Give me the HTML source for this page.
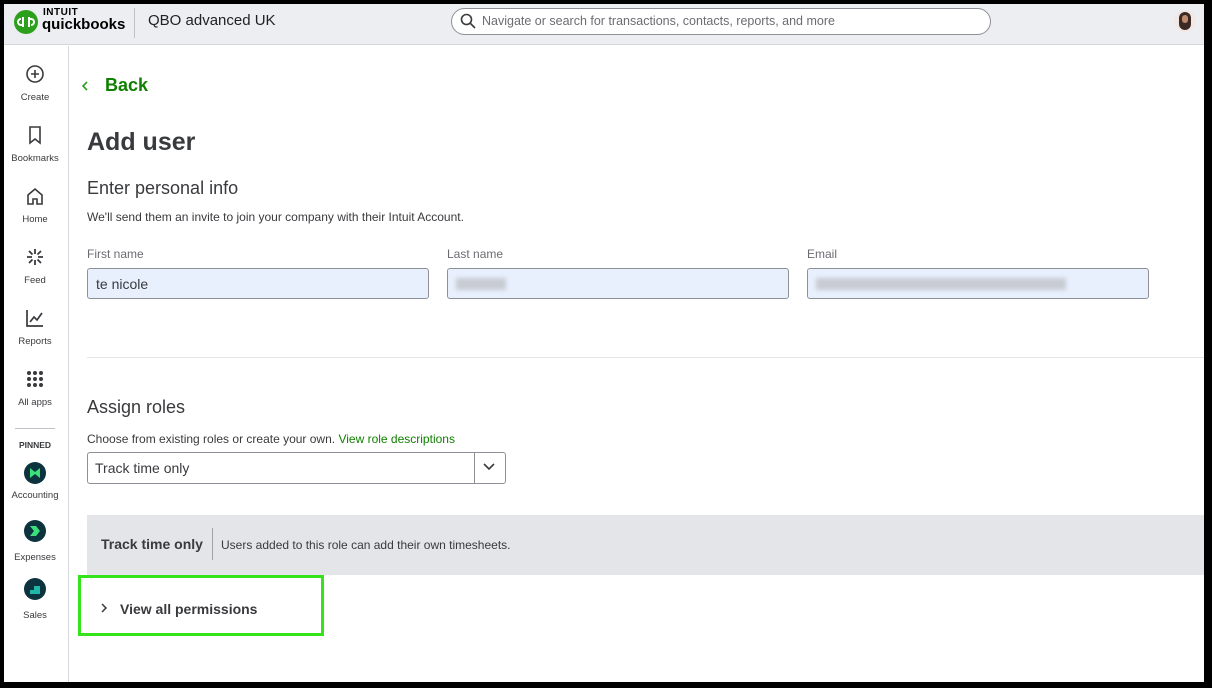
<!DOCTYPE html>
<html><head><meta charset="utf-8"><style>
*{box-sizing:border-box;margin:0;padding:0}
body{width:1212px;height:688px;background:#000;font-family:"Liberation Sans",sans-serif;color:#393a3d;position:relative;overflow:hidden}
.page{position:absolute;left:4px;top:4px;width:1200px;height:678px;background:#fff;overflow:hidden}
.top{position:absolute;left:0;top:0;width:1200px;height:41px;background:#eceef1;border-bottom:1px solid #d4d7dc}
.side{position:absolute;left:0;top:42px;width:65px;height:640px;border-right:1px solid #d4d7dc;background:#fff}
.ni{position:absolute;left:-1px;width:64px;text-align:center;font-size:9.5px;color:#393a3d}
.ni svg{display:block;margin:0 auto 8px}
.abs{position:absolute}
.lbl{font-size:12px;color:#6b6c72}
.inp{position:absolute;height:31px;border:1px solid #8d9096;border-radius:3px;background:#e8f0fe;font-size:14px;padding:7px 8px;color:#393a3d}
.blur{position:absolute;height:12px;background:#c8cbd2;filter:blur(2px)}
</style></head><body><div class="page">
<div class="top">
 <svg class="abs" style="left:10px;top:6px" width="24" height="24" viewBox="0 0 24 24"><circle cx="12" cy="12" r="12" fill="#2ca01c"/><path d="M9 7v10M7 9a3 3 0 0 0 0 6h2M15 17V7M17 15a3 3 0 0 0 0-6h-2" stroke="#fff" stroke-width="2" fill="none"/></svg>
 <div class="abs" style="left:39px;top:3px;font-size:10px;font-weight:bold;letter-spacing:.5px;color:#000">INTUIT</div>
 <div class="abs" style="left:38px;top:12px;font-size:15px;font-weight:bold;color:#000">quickbooks</div>
 <div class="abs" style="left:130px;top:4px;width:1px;height:30px;background:#c0c2c7"></div>
 <div class="abs" style="left:144px;top:8px;font-size:15px;color:#222">QBO advanced UK</div>
 <div class="abs" style="left:447px;top:4px;width:540px;height:27px;border:1px solid #8d9096;border-radius:14px;background:#fff"></div>
 <svg class="abs" style="left:456px;top:9px" width="16" height="16" viewBox="0 0 16 16"><circle cx="6.5" cy="6.5" r="5" stroke="#393a3d" stroke-width="1.6" fill="none"/><path d="M10.5 10.5L15 15" stroke="#393a3d" stroke-width="1.6"/></svg>
 <div class="abs" style="left:478px;top:10px;font-size:12.5px;color:#6b6c72">Navigate or search for transactions, contacts, reports, and more</div>
 <div class="abs" style="left:1170px;top:6px;width:22px;height:22px;border-radius:50%;background:#f3e8e6;overflow:hidden"><div style="position:absolute;left:5px;top:2px;width:12px;height:18px;border-radius:6px;background:#3a2a24"></div><div style="position:absolute;left:8px;top:5px;width:6px;height:8px;border-radius:3px;background:#c08a70"></div></div>
</div>
<div class="side">
 <div class="ni" style="top:18px"><svg width="20" height="20" viewBox="0 0 20 20"><circle cx="10" cy="10" r="8" stroke="#393a3d" stroke-width="1.6" fill="none"/><path d="M10 6v8M6 10h8" stroke="#393a3d" stroke-width="1.6"/></svg>Create</div>
 <div class="ni" style="top:79px"><svg width="20" height="20" viewBox="0 0 20 20"><path d="M5 2h10v16l-5-4-5 4z" stroke="#393a3d" stroke-width="1.6" fill="none"/></svg>Bookmarks</div>
 <div class="ni" style="top:140px"><svg width="20" height="20" viewBox="0 0 20 20"><path d="M3 9l7-6 7 6v9h-5v-5H8v5H3z" stroke="#393a3d" stroke-width="1.6" fill="none"/></svg>Home</div>
 <div class="ni" style="top:201px"><svg width="20" height="20" viewBox="0 0 20 20"><path d="M10 2v5M10 13v5M2 10h5M13 10h5M4 4l3.5 3.5M12.5 12.5L16 16M16 4l-3.5 3.5M7.5 12.5L4 16" stroke="#393a3d" stroke-width="1.8"/></svg>Feed</div>
 <div class="ni" style="top:262px"><svg width="20" height="20" viewBox="0 0 20 20"><path d="M2 2v16h16M5 14l4-5 3 3 5-7" stroke="#393a3d" stroke-width="1.7" fill="none"/></svg>Reports</div>
 <div class="ni" style="top:323px"><svg width="20" height="20" viewBox="0 0 20 20" fill="#393a3d"><circle cx="4" cy="4" r="2"/><circle cx="10" cy="4" r="2"/><circle cx="16" cy="4" r="2"/><circle cx="4" cy="10" r="2"/><circle cx="10" cy="10" r="2"/><circle cx="16" cy="10" r="2"/><circle cx="4" cy="16" r="2"/><circle cx="10" cy="16" r="2"/><circle cx="16" cy="16" r="2"/></svg>All apps</div>
 <div class="abs" style="left:11px;top:382px;width:40px;height:1px;background:#c0c2c7"></div>
 <div class="ni" style="top:394px;font-size:8.5px;font-weight:bold">PINNED</div>
 <div class="ni" style="top:416px"><svg width="22" height="22" viewBox="0 0 22 22" style="margin-bottom:6px"><circle cx="11" cy="11" r="11" fill="#0d333f"/><path d="M6 6l5 4 5-4v10l-5-4-5 4z" fill="#3be07a"/></svg>Accounting</div>
 <div class="ni" style="top:474px"><svg width="22" height="22" viewBox="0 0 22 22" style="margin-bottom:10px"><circle cx="11" cy="11" r="11" fill="#0d333f"/><path d="M6 6h6l4 5-4 5H6l4-5z" fill="#3be07a"/></svg>Expenses</div>
 <div class="ni" style="top:532px"><svg width="22" height="22" viewBox="0 0 22 22" style="margin-bottom:10px"><circle cx="11" cy="11" r="11" fill="#0d333f"/><path d="M6 16V12h4V8h6v8z" fill="#1fb8a8"/></svg>Sales</div>
</div>
<svg class="abs" style="left:77px;top:76px" width="8" height="12" viewBox="0 0 8 12"><path d="M6 2L2 6l4 4" stroke="#2ca01c" stroke-width="1.6" fill="none"/></svg>
<div class="abs" style="left:101px;top:71px;color:#108000;font-size:18px;font-weight:bold">Back</div>
<div class="abs" style="left:83px;top:124px;font-size:25px;font-weight:bold;color:#393a3d">Add user</div>
<div class="abs" style="left:83px;top:174px;font-size:18px">Enter personal info</div>
<div class="abs" style="left:83px;top:206px;font-size:12px">We'll send them an invite to join your company with their Intuit Account.</div>
<div class="abs lbl" style="left:83px;top:243px">First name</div>
<div class="abs lbl" style="left:443px;top:243px">Last name</div>
<div class="abs lbl" style="left:803px;top:243px">Email</div>
<div class="inp" style="left:83px;top:264px;width:342px">te nicole</div>
<div class="inp" style="left:443px;top:264px;width:342px"></div>
<div class="inp" style="left:803px;top:264px;width:342px"></div>
<div class="blur" style="left:452px;top:274px;width:50px"></div>
<div class="blur" style="left:812px;top:274px;width:250px"></div>
<div class="abs" style="left:83px;top:353px;width:1117px;height:1px;background:#e3e5e8"></div>
<div class="abs" style="left:83px;top:393px;font-size:18px">Assign roles</div>
<div class="abs" style="left:83px;top:428px;font-size:12px">Choose from existing roles or create your own. <span style="color:#108000">View role descriptions</span></div>
<div class="abs" style="left:83px;top:448px;width:419px;height:32px;border:1px solid #8d9096;border-radius:3px"></div>
<div class="abs" style="left:470px;top:449px;width:1px;height:30px;background:#8d9096"></div>
<svg class="abs" style="left:478px;top:458px" width="14" height="10" viewBox="0 0 14 10"><path d="M2 2l5 5 5-5" stroke="#393a3d" stroke-width="1.6" fill="none"/></svg>
<div class="abs" style="left:91px;top:456px;font-size:14px">Track time only</div>
<div class="abs" style="left:83px;top:511px;width:1117px;height:60px;background:#e3e5e8"></div>
<div class="abs" style="left:97px;top:532px;font-size:14px;font-weight:bold">Track time only</div>
<div class="abs" style="left:208px;top:524px;width:1px;height:32px;background:#a0a3a8"></div>
<div class="abs" style="left:217px;top:534px;font-size:12px">Users added to this role can add their own timesheets.</div>
<div class="abs" style="left:74px;top:571px;width:246px;height:61px;border:3px solid #35e31a"></div>
<svg class="abs" style="left:96px;top:598px" width="8" height="12" viewBox="0 0 8 12"><path d="M2 2l4 4-4 4" stroke="#393a3d" stroke-width="1.5" fill="none"/></svg>
<div class="abs" style="left:116px;top:597px;font-size:14px;font-weight:bold">View all permissions</div>
</div></body></html>
